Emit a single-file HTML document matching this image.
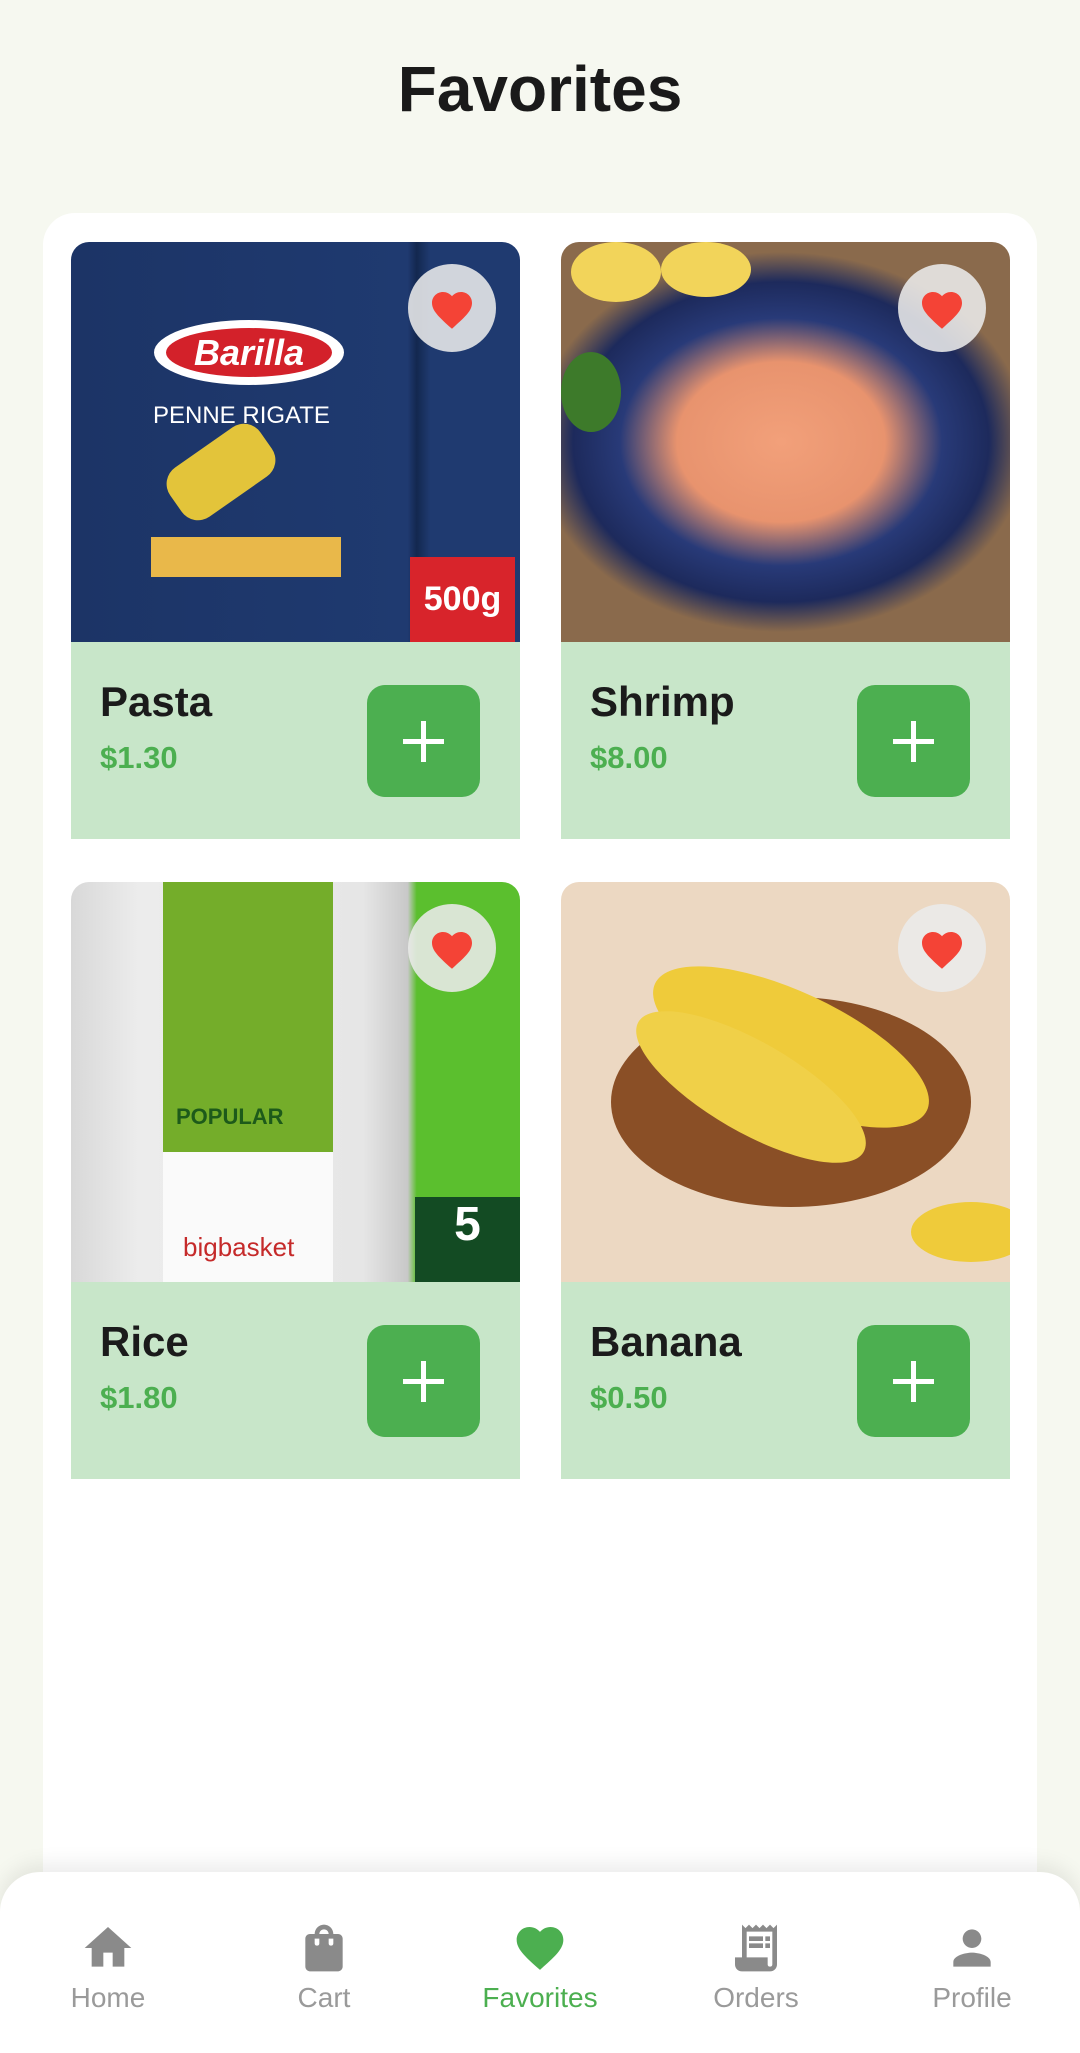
<!DOCTYPE html>
<html><head><meta charset="utf-8"><style>
*{margin:0;padding:0;box-sizing:border-box}
body{width:1080px;height:2053px;background:#f6f8f0;font-family:"Liberation Sans",Roboto,sans-serif;position:relative;overflow:hidden}
h1{position:absolute;top:52px;width:100%;text-align:center;font-size:64px;font-weight:bold;color:#1a1a1a}
.panel{position:absolute;left:43px;top:213px;width:994px;height:1700px;background:#fff;border-radius:32px}
.card{position:absolute;width:449px;height:597px}
.img{position:absolute;left:0;top:0;width:449px;height:400px;border-radius:18px 18px 0 0;overflow:hidden}
.info{position:absolute;left:0;top:400px;width:449px;height:197px;background:#c8e6c9}
.name{position:absolute;left:29px;top:36px;font-size:42px;font-weight:bold;color:#1b1b1b}
.price{position:absolute;left:29px;top:98px;font-size:31px;font-weight:bold;color:#4caf50}
.plus{position:absolute;left:296px;top:43px;width:113px;height:112px;background:#4caf50;border-radius:18px}
.plus:before{content:"";position:absolute;left:36px;top:54px;width:41px;height:5px;background:#fff}
.plus:after{content:"";position:absolute;left:54px;top:36px;width:5px;height:41px;background:#fff}
.heart{position:absolute;left:337px;top:22px;width:88px;height:88px;border-radius:50%;background:rgba(235,235,235,.88)}
.heart svg{position:absolute;left:20px;top:22px}
.nav{position:absolute;left:0;top:1872px;width:1080px;height:181px;background:#fff;border-radius:40px 40px 0 0;box-shadow:0 -8px 20px rgba(0,0,0,.08)}
.ni{position:absolute;top:48px;width:160px;text-align:center;color:#9a9a9a;font-size:28px}
.ni svg{display:block;margin:0 auto 6px}
</style></head><body>
<h1>Favorites</h1>
<div class="panel"></div>

<div class="card" style="left:71px;top:242px">
<div class="img" style="background:linear-gradient(90deg,#1c3466 0,#1f3a70 75%,#13284f 77%,#1f3a70 80%);">
<div style="position:absolute;left:83px;top:78px;width:190px;height:65px;border-radius:50%;background:#fff"></div>
<div style="position:absolute;left:95px;top:86px;width:166px;height:49px;border-radius:50%;background:#d3212a;color:#fff;font-size:36px;font-style:italic;font-weight:bold;text-align:center;line-height:49px">Barilla</div>
<div style="position:absolute;left:82px;top:160px;color:#fff;font-size:24px">PENNE RIGATE</div>
<div style="position:absolute;left:80px;top:295px;width:190px;height:40px;background:#e9b84a"></div>
<div style="position:absolute;left:95px;top:200px;width:110px;height:60px;background:#e3c43a;transform:rotate(-35deg);border-radius:20px"></div>
<div style="position:absolute;left:339px;top:315px;width:105px;height:85px;background:#d8242b;color:#fff;font-size:34px;font-weight:bold;text-align:center;line-height:85px">500g</div>
</div>
<div class="heart"><svg width="48" height="44" viewBox="0 0 24 22"><path d="M12 21.4l-1.5-1.3C5.4 15.4 2 12.3 2 8.5 2 5.4 4.4 3 7.5 3c1.7 0 3.4.8 4.5 2.1C13.1 3.8 14.8 3 16.5 3 19.6 3 22 5.4 22 8.5c0 3.8-3.4 6.9-8.5 11.5z" fill="#f44336"/></svg></div>
<div class="info"><div class="name">Pasta</div><div class="price">$1.30</div><div class="plus"></div></div>
</div>

<div class="card" style="left:561px;top:242px">
<div class="img" style="background:radial-gradient(ellipse 260px 200px at 220px 200px,#f2a07a 0,#e8936e 40%,#283a78 62%,#1d2a5c 80%,#8a6a4c 95%)">
<div style="position:absolute;left:10px;top:0;width:90px;height:60px;border-radius:50%;background:#f2d45a"></div>
<div style="position:absolute;left:100px;top:0;width:90px;height:55px;border-radius:50%;background:#f2d45a"></div>
<div style="position:absolute;left:0;top:110px;width:60px;height:80px;border-radius:50%;background:#3d7a2a"></div>
</div>
<div class="heart"><svg width="48" height="44" viewBox="0 0 24 22"><path d="M12 21.4l-1.5-1.3C5.4 15.4 2 12.3 2 8.5 2 5.4 4.4 3 7.5 3c1.7 0 3.4.8 4.5 2.1C13.1 3.8 14.8 3 16.5 3 19.6 3 22 5.4 22 8.5c0 3.8-3.4 6.9-8.5 11.5z" fill="#f44336"/></svg></div>
<div class="info"><div class="name">Shrimp</div><div class="price">$8.00</div><div class="plus"></div></div>
</div>

<div class="card" style="left:71px;top:882px">
<div class="img" style="background:linear-gradient(90deg,#d8d8d8 0,#ececec 15%,#e6e6e6 65%,#c8c8c8 75%,#5bbf2e 77%)">
<div style="position:absolute;left:92px;top:0;width:170px;height:270px;background:#74ad2a"></div>
<div style="position:absolute;left:92px;top:270px;width:170px;height:130px;background:#fafafa"></div>
<div style="position:absolute;left:105px;top:222px;color:#1d5a1a;font-size:22px;font-weight:bold">POPULAR</div>
<div style="position:absolute;left:112px;top:350px;color:#c52a2a;font-size:26px">bigbasket</div>
<div style="position:absolute;left:344px;top:315px;width:105px;height:85px;background:#134b23;color:#fff;font-size:48px;font-weight:bold;text-align:center">5</div>
</div>
<div class="heart"><svg width="48" height="44" viewBox="0 0 24 22"><path d="M12 21.4l-1.5-1.3C5.4 15.4 2 12.3 2 8.5 2 5.4 4.4 3 7.5 3c1.7 0 3.4.8 4.5 2.1C13.1 3.8 14.8 3 16.5 3 19.6 3 22 5.4 22 8.5c0 3.8-3.4 6.9-8.5 11.5z" fill="#f44336"/></svg></div>
<div class="info"><div class="name">Rice</div><div class="price">$1.80</div><div class="plus"></div></div>
</div>

<div class="card" style="left:561px;top:882px">
<div class="img" style="background:#ecd8c2">
<div style="position:absolute;left:50px;top:115px;width:360px;height:210px;border-radius:50%;background:#8a4f26"></div>
<div style="position:absolute;left:80px;top:110px;width:300px;height:110px;border-radius:50%;background:#efcb3a;transform:rotate(25deg)"></div>
<div style="position:absolute;left:60px;top:160px;width:260px;height:90px;border-radius:50%;background:#f0d048;transform:rotate(30deg)"></div>
<div style="position:absolute;left:350px;top:320px;width:120px;height:60px;border-radius:50%;background:#efcb3a"></div>
</div>
<div class="heart"><svg width="48" height="44" viewBox="0 0 24 22"><path d="M12 21.4l-1.5-1.3C5.4 15.4 2 12.3 2 8.5 2 5.4 4.4 3 7.5 3c1.7 0 3.4.8 4.5 2.1C13.1 3.8 14.8 3 16.5 3 19.6 3 22 5.4 22 8.5c0 3.8-3.4 6.9-8.5 11.5z" fill="#f44336"/></svg></div>
<div class="info"><div class="name">Banana</div><div class="price">$0.50</div><div class="plus"></div></div>
</div>

<div class="nav">
<div class="ni" style="left:28px"><svg width="56" height="56" viewBox="0 0 24 24"><path d="M10 20v-6h4v6h5v-8h3L12 3 2 12h3v8z" fill="#8a8a8a"/></svg>Home</div>
<div class="ni" style="left:244px"><svg width="56" height="56" viewBox="0 0 24 24"><path d="M18 6h-2c0-2.2-1.8-4-4-4S8 3.8 8 6H6c-1.1 0-2 .9-2 2v12c0 1.1.9 2 2 2h12c1.1 0 2-.9 2-2V8c0-1.1-.9-2-2-2zm-8 4c0 .6-.4 1-1 1s-1-.4-1-1V8h2v2zm2-6c1.1 0 2 .9 2 2h-4c0-1.1.9-2 2-2zm4 6c0 .6-.4 1-1 1s-1-.4-1-1V8h2v2z" fill="#8a8a8a"/></svg>Cart</div>
<div class="ni" style="left:460px;color:#4caf50"><svg width="56" height="56" viewBox="0 0 24 24"><path d="M12 21.4l-1.5-1.3C5.4 15.4 2 12.3 2 8.5 2 5.4 4.4 3 7.5 3c1.7 0 3.4.8 4.5 2.1C13.1 3.8 14.8 3 16.5 3 19.6 3 22 5.4 22 8.5c0 3.8-3.4 6.9-8.5 11.5z" fill="#4caf50"/></svg>Favorites</div>
<div class="ni" style="left:676px"><svg width="56" height="56" viewBox="0 0 24 24"><path d="M19.5 3.5L18 2l-1.5 1.5L15 2l-1.5 1.5L12 2l-1.5 1.5L9 2 7.5 3.5 6 2v14H3v3c0 1.7 1.3 3 3 3h12c1.7 0 3-1.3 3-3V2l-1.5 1.5zM19 19c0 .6-.4 1-1 1s-1-.4-1-1v-3H8V5h11v14zM9 7h6v2H9zm7 0h2v2h-2zm-7 3h6v2H9zm7 0h2v2h-2z" fill="#8a8a8a"/></svg>Orders</div>
<div class="ni" style="left:892px"><svg width="56" height="56" viewBox="0 0 24 24"><path d="M12 12c2.2 0 4-1.8 4-4s-1.8-4-4-4-4 1.8-4 4 1.8 4 4 4zm0 2c-2.7 0-8 1.3-8 4v2h16v-2c0-2.7-5.3-4-8-4z" fill="#8a8a8a"/></svg>Profile</div>
</div>
</body></html>
